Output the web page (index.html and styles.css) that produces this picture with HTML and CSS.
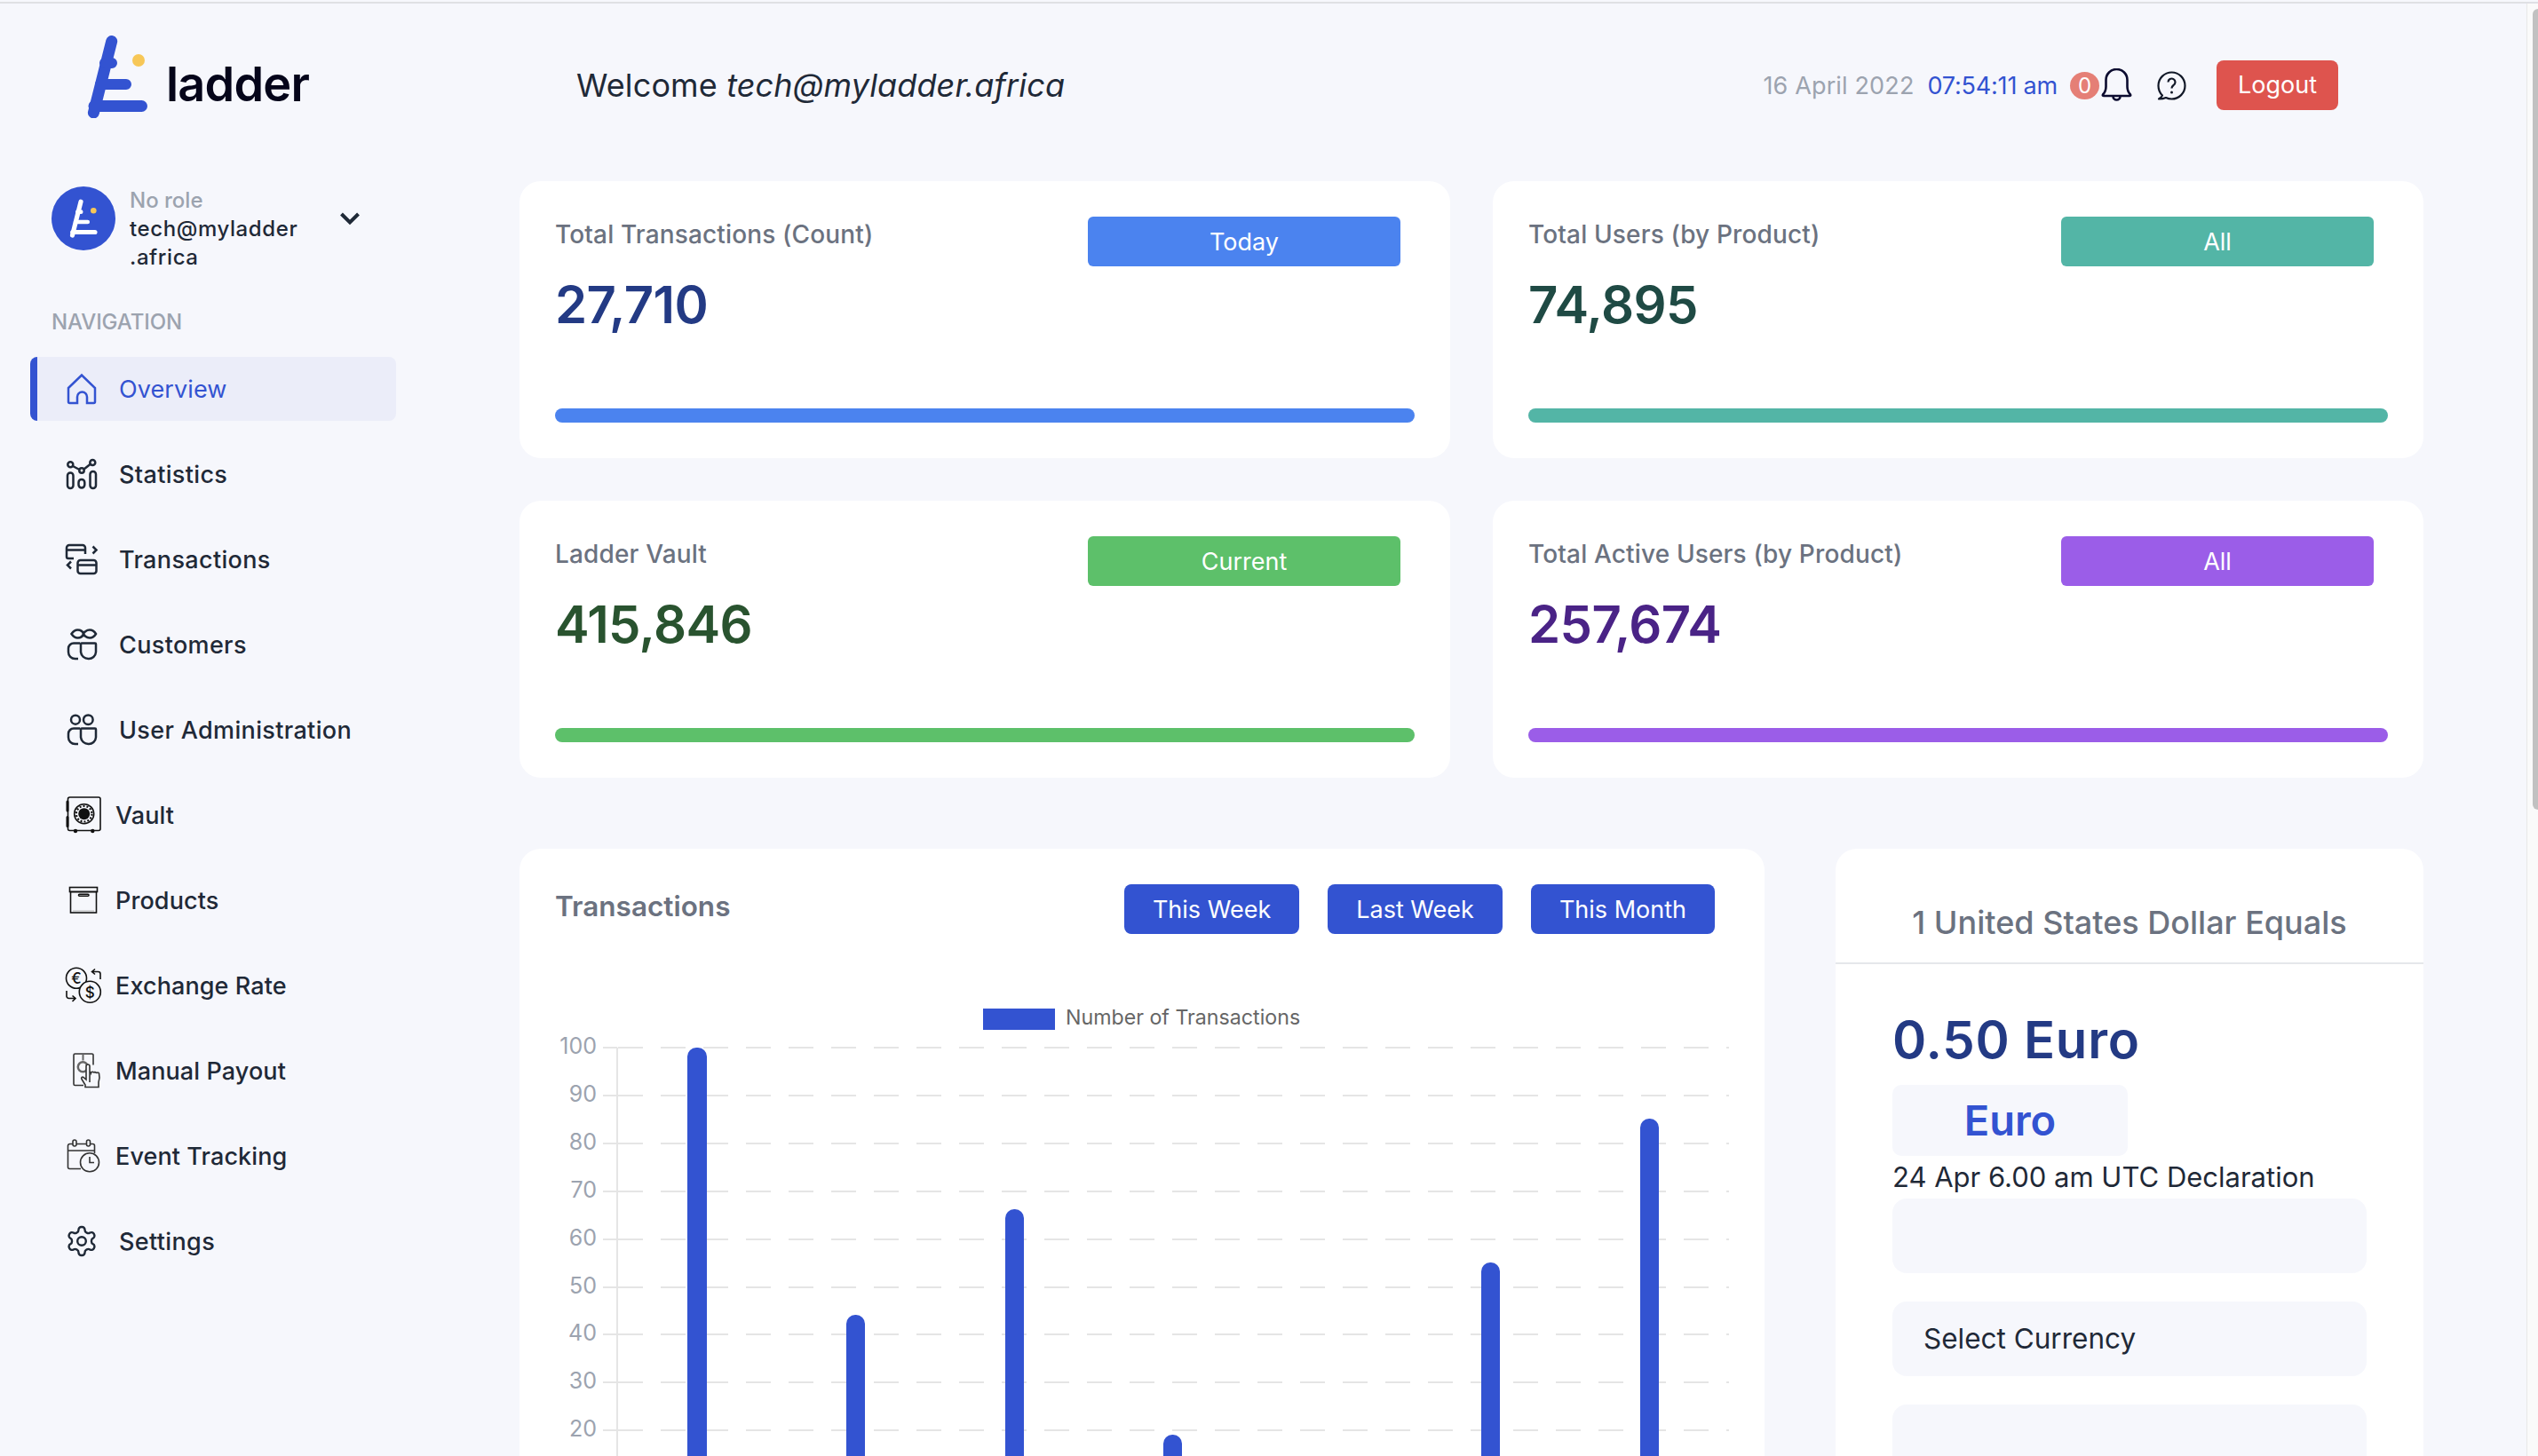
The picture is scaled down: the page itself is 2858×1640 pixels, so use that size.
FILE: index.html
```html
<!DOCTYPE html>
<html lang="en">
<head>
  <meta charset="UTF-8" />
  <title>Ladder Dashboard</title>
  <link rel="stylesheet" href="styles.css">
</head>
<body>
  <div class="topline"></div>
  <div class="page">

    <!-- sidebar -->
    <aside class="sidebar">
      <div class="logo">
        <svg class="logo-mark" viewBox="0 0 68 93">
          <g stroke="#3353d1" stroke-linecap="round" fill="none">
            <path stroke-width="13" d="M7.4 87 27.7 6.5"/>
            <path stroke-width="12" d="M20 31h8M15 55h29"/>
            <path stroke-width="13" d="M8 79.5h53.5"/>
          </g>
          <circle cx="58" cy="28" r="7" fill="#f7c757"/>
        </svg>
        <span class="logo-text">ladder</span>
      </div>

      <div class="profile">
        <div class="avatar">
          <svg viewBox="0 0 68 93" width="32" height="44">
            <g stroke="#fff" stroke-linecap="round" fill="none">
              <path stroke-width="11" d="M7.4 87 27.7 6.5"/>
              <path stroke-width="10" d="M20 31h8M15 55h29"/>
              <path stroke-width="11" d="M8 79.5h53.5"/>
            </g>
            <circle cx="58" cy="28" r="7" fill="#f7c757"/>
          </svg>
        </div>
        <div class="profile-text">
          <div class="role">No role</div>
          <div class="email">tech@myladder<br>.africa</div>
        </div>
        <svg class="chevron" viewBox="0 0 24 16" width="24" height="16">
          <path d="M2.5 3 12 12.5 21.5 3" fill="none" stroke="#1f2937" stroke-width="4"/>
        </svg>
      </div>

      <div class="nav-title">NAVIGATION</div>

      <nav class="nav">
        <a class="nav-item active" href="#">
          <svg class="ic" viewBox="0 0 40 40"><path d="M3 19 18 4.500 33 19v15.500a1.500 1.500 0 0 1-1.500 1.500H24V29a5 5 0 0 0-11 0v7H4.500A1.500 1.500 0 0 1 3 34.500z"/></svg>
          <span>Overview</span>
        </a>
        <a class="nav-item" href="#">
          <svg class="ic" viewBox="0 0 40 40">
            <circle cx="5.300" cy="9.300" r="3"/><circle cx="18" cy="16" r="2.700"/><circle cx="30.300" cy="7" r="3"/>
            <path d="M8 11l7.500 4M20.500 14.500 27.500 9"/>
            <rect x="2" y="18.500" width="6.500" height="17.500" rx="3.200"/>
            <rect x="14.500" y="26" width="6.800" height="9.500" rx="3.400"/>
            <rect x="27.500" y="17" width="6.500" height="19" rx="3.200"/>
          </svg>
          <span>Statistics</span>
        </a>
        <a class="nav-item" href="#">
          <svg class="ic" viewBox="0 0 40 40">
            <path d="M9 19H3a2 2 0 0 1-2-2V7a3 3 0 0 1 3-3h15a3 3 0 0 1 3 3v7M1.500 9.500h20"/>
            <rect x="13.500" y="21" width="21" height="15" rx="3"/>
            <path d="M13.500 26.500h21M30.500 5.500l4 4-4 4M6 22.500l-4 4 4 4"/>
          </svg>
          <span>Transactions</span>
        </a>
        <a class="nav-item" href="#">
          <svg class="ic" viewBox="0 0 40 40">
            <path d="M6.500 8c2-3 4-4.500 7-4.500 4 0 6 3 6.500 4.500.5-1.500 3-4.500 7-4.500 3 0 5.500 2 7 4.500-1.500 2.500-4 4.500-7 4.500-4 0-6.500-3-7-4.500C19.500 9.500 17.500 12.500 13.500 12.500c-3 0-5-1.500-7-4.500z"/>
            <path d="M16 18.500H9A6 6 0 0 0 3 24.500v4A7.500 7.500 0 0 0 10.500 36H14"/>
            <path d="M17 19.500a1 1 0 0 1 1-1h15a1 1 0 0 1 1 1v9A8 8 0 0 1 25.500 36 8.500 8.500 0 0 1 17 28.500z"/>
          </svg>
          <span>Customers</span>
        </a>
        <a class="nav-item" href="#">
          <svg class="ic" viewBox="0 0 40 40">
            <circle cx="11" cy="8.700" r="5"/><circle cx="25.300" cy="8.700" r="5.300"/>
            <path d="M16 18.500H9A6 6 0 0 0 3 24.500v4A7.500 7.500 0 0 0 10.500 36H14"/>
            <path d="M17 19.500a1 1 0 0 1 1-1h15a1 1 0 0 1 1 1v9A8 8 0 0 1 25.500 36 8.500 8.500 0 0 1 17 28.500z"/>
          </svg>
          <span>User Administration</span>
        </a>
        <a class="nav-item wide" href="#">
          <svg class="ic thin" viewBox="0 0 40 40">
            <rect x="2.500" y="0" width="36.500" height="37.500" rx="2"/>
            <path class="solid" d="M0.500 5a1.500 1.500 0 0 1 3 0v10a1.500 1.500 0 0 1-3 0zM0.500 22.500a1.500 1.500 0 0 1 3 0v10a1.500 1.500 0 0 1-3 0z"/>
            <circle cx="20.700" cy="18.700" r="11"/>
            <circle cx="20.700" cy="18.700" r="8.800" stroke-width="2.200" stroke-dasharray="2 2"/>
            <circle class="solid" cx="20.700" cy="18.700" r="6.500"/>
            <circle class="solid" cx="11" cy="38" r="2.200"/><circle class="solid" cx="30.300" cy="38" r="2.200"/>
          </svg>
          <span>Vault</span>
        </a>
        <a class="nav-item wide" href="#">
          <svg class="ic thin" viewBox="0 0 40 40">
            <rect x="4.500" y="5.500" width="31" height="5"/>
            <rect x="5.500" y="10.500" width="29" height="23.500"/>
            <rect x="14.500" y="13.300" width="11.500" height="2" rx="1"/>
            <path d="M8 32h24" stroke="#ccc"/>
          </svg>
          <span>Products</span>
        </a>
        <a class="nav-item wide" href="#">
          <svg class="ic thin" viewBox="0 0 40 40">
            <circle cx="12" cy="11.700" r="11.500"/>
            <circle class="page-fill" cx="27.300" cy="27.300" r="12"/>
            <text class="glyph" x="12" y="17.500" font-size="17">€</text>
            <text class="glyph" x="27.300" y="33.500" font-size="17">$</text>
            <path d="M39 13V7a2.500 2.500 0 0 0-2.500-2.500H29.500M33 1.500l-3.500 3 3.500 3M1 26v6a2.500 2.500 0 0 0 2.500 2.500h7M7.500 31.500l3.500 3-3.500 3.500"/>
          </svg>
          <span>Exchange Rate</span>
        </a>
        <a class="nav-item wide" href="#">
          <svg class="ic thin grey" viewBox="0 0 40 40">
            <path d="M20 36.500h-9.500a1.500 1.500 0 0 1-1.500-1.500V2.500A1.500 1.500 0 0 1 10.500 1h19A1.500 1.500 0 0 1 31 2.500v11"/>
            <circle cx="19.300" cy="15.700" r="5.500" stroke-width="2.500" stroke="#666"/>
            <path d="M19.500 1.500v7" stroke="#666" stroke-width="2"/>
            <path class="page-fill" d="M27 33V15a2 2 0 0 0-4 0v15l-3-2.500c-1.500-1-3 .5-2 2l4 6.500v2.500h15V33c1.500-4 1-8 .5-10-.5-1.500-2.500-1-3 0 0-1.500-2.500-2-3-.5 0-1.500-2.500-2-3 0-.3-1-1.500-1.500-1.500-.5z"/>
          </svg>
          <span>Manual Payout</span>
        </a>
        <a class="nav-item wide" href="#">
          <svg class="ic thin grey" viewBox="0 0 40 40">
            <path d="M17 34.500H4.500a2 2 0 0 1-2-2V8.500a2 2 0 0 1 2-2h26a2 2 0 0 1 2 2V17M2.500 14h30"/>
            <rect x="8" y="2" width="4" height="7" rx="2" class="page-fill"/>
            <rect x="23.500" y="2" width="4" height="7" rx="2" class="page-fill"/>
            <circle class="page-fill" cx="27" cy="27.300" r="10.500"/>
            <path d="M27 21v6.500h5"/>
          </svg>
          <span>Event Tracking</span>
        </a>
        <a class="nav-item" href="#">
          <svg class="ic" viewBox="0 0 40 40">
            <g transform="translate(-1.200 .8) scale(1.600)" stroke-width="1.500">
              <path d="M12.220 2h-.44a2 2 0 0 0-2 2v.18a2 2 0 0 1-1 1.730l-.43.25a2 2 0 0 1-2 0l-.15-.08a2 2 0 0 0-2.730.73l-.22.38a2 2 0 0 0 .73 2.730l.15.1a2 2 0 0 1 1 1.720v.51a2 2 0 0 1-1 1.740l-.15.09a2 2 0 0 0-.73 2.730l.22.38a2 2 0 0 0 2.730.73l.15-.08a2 2 0 0 1 2 0l.43.25a2 2 0 0 1 1 1.730V20a2 2 0 0 0 2 2h.44a2 2 0 0 0 2-2v-.18a2 2 0 0 1 1-1.730l.43-.25a2 2 0 0 1 2 0l.15.08a2 2 0 0 0 2.730-.73l.22-.39a2 2 0 0 0-.73-2.730l-.15-.08a2 2 0 0 1-1-1.740v-.5a2 2 0 0 1 1-1.740l.15-.09a2 2 0 0 0 .73-2.730l-.22-.38a2 2 0 0 0-2.730-.73l-.15.08a2 2 0 0 1-2 0l-.43-.25a2 2 0 0 1-1-1.730V4a2 2 0 0 0-2-2z"/>
              <circle cx="12" cy="12" r="3"/>
            </g>
          </svg>
          <span>Settings</span>
        </a>
      </nav>
    </aside>

    <!-- main content -->
    <main class="main">
      <header class="header">
        <div class="welcome">Welcome <em>tech@myladder.africa</em></div>
        <div class="header-right">
          <span class="date">16 April 2022</span>
          <span class="time">07:54:11 am</span>
          <span class="badge">0</span>
          <svg class="bell" viewBox="0 0 35 38" width="35" height="38">
            <path d="M2 29.500c2.500-2.500 3.500-4.500 3.500-9V13a12 12 0 0 1 24 0v7.500c0 4.500 1 6.500 3.500 9 .5 1-.2 1.500-1 1.500H3c-.8 0-1.500-.5-1-1.500z" fill="none" stroke="#0c0c30" stroke-width="2.600"/>
            <path d="M13.500 31.500a4 4 0 0 0 8 0" fill="none" stroke="#0c0c30" stroke-width="2.600"/>
          </svg>
          <svg class="help" viewBox="0 0 33 33" width="33" height="33">
            <path d="M6 27.500C3 24.500 1.500 21 1.500 16.500a15 15 0 1 1 15 15c-2.500 0-4.500-.5-6.500-1.500-2 1-5 1.500-8 1.500 1.500-1 3.500-2.500 4-4z" fill="none" stroke="#111827" stroke-width="2.200" stroke-linejoin="round"/>
            <path d="M12.500 12.500a4 4 0 1 1 6 3.500c-1.500 1-2 1.800-2 3.500" fill="none" stroke="#111827" stroke-width="2.200"/>
            <circle cx="16.500" cy="24" r="1.500" fill="#111827"/>
          </svg>
          <a class="logout" href="#">Logout</a>
        </div>
      </header>

      <section class="stats">
        <div class="stat-card blue">
          <div class="stat-head">
            <div class="stat-title">Total Transactions (Count)</div>
            <button class="stat-btn">Today</button>
          </div>
          <div class="stat-value">27,710</div>
          <div class="stat-bar"></div>
        </div>
        <div class="stat-card teal">
          <div class="stat-head">
            <div class="stat-title">Total Users (by Product)</div>
            <button class="stat-btn">All</button>
          </div>
          <div class="stat-value">74,895</div>
          <div class="stat-bar"></div>
        </div>
        <div class="stat-card green">
          <div class="stat-head">
            <div class="stat-title">Ladder Vault</div>
            <button class="stat-btn">Current</button>
          </div>
          <div class="stat-value">415,846</div>
          <div class="stat-bar"></div>
        </div>
        <div class="stat-card purple">
          <div class="stat-head">
            <div class="stat-title">Total Active Users (by Product)</div>
            <button class="stat-btn">All</button>
          </div>
          <div class="stat-value">257,674</div>
          <div class="stat-bar"></div>
        </div>
      </section>

      <section class="lower">
        <div class="chart-card">
          <div class="chart-head">
            <div class="chart-title">Transactions</div>
            <div class="chart-btns">
              <button class="chart-btn">This Week</button>
              <button class="chart-btn">Last Week</button>
              <button class="chart-btn">This Month</button>
            </div>
          </div>
          <svg class="chart" viewBox="625 1100 1325 600" width="1325" height="600">
            <rect class="bar" x="1107" y="1136" width="81" height="24"/>
            <text class="legend" x="1200" y="1154">Number of Transactions</text>

            <path class="grid" d="M696 1180H1947M696 1234H1947M696 1288H1947M696 1342H1947M696 1396H1947M696 1450H1947M696 1503H1947M696 1557H1947M696 1611H1947"/>
            <path class="axis" d="M695 1180V1700M679 1180H695M679 1234H695M679 1288H695M679 1342H695M679 1396H695M679 1450H695M679 1503H695M679 1557H695M679 1611H695"/>

            <text class="tick" x="672" y="1187">100</text>
            <text class="tick" x="672" y="1241">90</text>
            <text class="tick" x="672" y="1295">80</text>
            <text class="tick" x="672" y="1349">70</text>
            <text class="tick" x="672" y="1403">60</text>
            <text class="tick" x="672" y="1457">50</text>
            <text class="tick" x="672" y="1510">40</text>
            <text class="tick" x="672" y="1564">30</text>
            <text class="tick" x="672" y="1618">20</text>

            <rect class="bar" x="774" y="1180" width="22" height="520" rx="10"/>
            <rect class="bar" x="953" y="1481" width="21" height="220" rx="10"/>
            <rect class="bar" x="1132" y="1362" width="21" height="340" rx="10"/>
            <rect class="bar" x="1310" y="1616" width="21" height="90" rx="10"/>
            <rect class="bar" x="1668" y="1422" width="21" height="280" rx="10"/>
            <rect class="bar" x="1847" y="1260" width="21" height="440" rx="10"/>
          </svg>
        </div>

        <div class="rate-card">
          <div class="rate-head">1 United States Dollar Equals</div>
          <div class="rate-body">
            <div class="rate-value">0.50 Euro</div>
            <div class="rate-chip">Euro</div>
            <div class="rate-note">24 Apr 6.00 am UTC Declaration</div>
            <div class="rate-field"></div>
            <div class="rate-field">Select Currency</div>
            <div class="rate-field"></div>
          </div>
        </div>
      </section>
    </main>

    <!-- page scrollbar -->
    <div class="scrollbar"><div class="scroll-thumb"></div></div>
  </div>
</body>
</html>
```

FILE: styles.css
```css
* {
  box-sizing: border-box;
}

html, body {
  height: 1640px;
  overflow: hidden;
}

body {
  margin: 0;
  background: #f6f7fc;
  font-family: "Inter", "Noto Sans", sans-serif;
  color: #1f2937;
}

.topline {
  height: 4px;
  border-bottom: 2px solid #dfe0e4;
}

.page {
  display: flex;
  height: 1636px;
}

/* sidebar */
.sidebar {
  width: 585px;
  flex-shrink: 0;
}

.logo {
  display: flex;
  align-items: flex-start;
  padding: 36px 0 0 98px;
  height: 206px;
}

.logo-mark {
  width: 68px;
  height: 93px;
}

.logo-text {
  margin: 23px 0 0 21px;
  font-size: 54px;
  line-height: 64px;
  font-weight: 600;
  color: #05051a;
  letter-spacing: -0.8px;
}

.profile {
  display: flex;
  align-items: flex-start;
  padding-left: 58px;
  height: 96px;
}

.avatar {
  width: 72px;
  height: 72px;
  border-radius: 50%;
  background: #3353d1;
  display: flex;
  align-items: center;
  justify-content: center;
}

.profile-text {
  margin-left: 16px;
  width: 208px;
  font-size: 24px;
  line-height: 32px;
  font-weight: 500;
}

.role {
  color: #9ca3af;
}

.email {
  letter-spacing: 0.6px;
}

.chevron {
  margin: 28px 0 0 28px;
}

.nav-title {
  margin: 41px 0 0 58px;
  font-size: 24px;
  line-height: 32px;
  color: #9ca3af;
  font-weight: 500;
  letter-spacing: -0.1px;
}

.nav {
  display: flex;
  flex-direction: column;
  gap: 24px;
  width: 412px;
  margin: 23px 0 0 34px;
}

.nav-item {
  display: flex;
  align-items: center;
  gap: 20px;
  height: 72px;
  padding-left: 32px;
  border-left: 8px solid transparent;
  border-radius: 8px;
  font-size: 27px;
  font-weight: 500;
  letter-spacing: 0.35px;
  color: #1f2937;
  text-decoration: none;
}

.nav-item.wide {
  gap: 16px;
  letter-spacing: 0.1px;
}

.nav-item.active {
  background: #ebedf9;
  border-left-color: #3353d1;
  color: #3353d1;
  font-weight: 400;
  letter-spacing: 0.1px;
}

.ic {
  width: 40px;
  height: 40px;
  flex-shrink: 0;
  overflow: visible;
  fill: none;
  stroke: #1f2937;
  stroke-width: 2.5;
}

.active .ic {
  stroke: #3353d1;
}

.ic.thin {
  stroke: #111;
  stroke-width: 1.6;
}

.ic.grey {
  stroke: #333;
}

.ic .solid {
  fill: #111;
  stroke: none;
}

.ic .page-fill {
  fill: #f6f7fc;
}

.ic .glyph {
  fill: #111;
  stroke: none;
  text-anchor: middle;
  font-family: "Inter", sans-serif;
}

/* header */
.main {
  width: 2260px;
  padding-right: 116px;
  flex-shrink: 0;
}

.header {
  display: flex;
  align-items: center;
  justify-content: space-between;
  height: 184px;
  margin-bottom: 16px;
  padding: 0 96px 0 64px;
}

.welcome {
  font-size: 36px;
  letter-spacing: 0.12px;
  color: #1f2937;
}

.header-right {
  display: flex;
  align-items: center;
}

.date {
  font-size: 27px;
  letter-spacing: 0.15px;
  color: #9ca3af;
}

.time {
  margin-left: 15px;
  font-size: 27px;
  letter-spacing: -0.2px;
  color: #3353d1;
}

.badge {
  width: 33px;
  height: 31px;
  margin-left: 14px;
  border-radius: 50%;
  background: #e57f76;
  color: #fff;
  font-size: 24px;
  line-height: 31px;
  text-align: center;
}

.bell {
  margin-left: 2px;
}

.help {
  margin-left: 28px;
}

.logout {
  display: block;
  margin-left: 34px;
  width: 137px;
  height: 56px;
  border-radius: 8px;
  background: #de544e;
  color: #fff;
  font-size: 27px;
  line-height: 56px;
  text-align: center;
  text-decoration: none;
}

/* stat cards */
.stats {
  display: grid;
  grid-template-columns: 1048px 1048px;
  gap: 48px;
}

.stat-card {
  height: 312px;
  padding: 40px;
  background: #fff;
  border-radius: 24px;
}

.stat-head {
  display: flex;
  justify-content: space-between;
}

.stat-title {
  font-size: 28px;
  line-height: 40px;
  font-weight: 500;
  letter-spacing: 0.15px;
  color: #6b7280;
}

.stat-btn {
  width: 352px;
  height: 56px;
  margin-right: 16px;
  border: none;
  border-radius: 6px;
  color: #fff;
  font-family: inherit;
  font-size: 27px;
}

.stat-value {
  margin-top: 7px;
  font-size: 58px;
  line-height: 72px;
  font-weight: 600;
  letter-spacing: -0.6px;
}

.stat-bar {
  height: 16px;
  margin-top: 81px;
  border-radius: 8px;
}

.blue .stat-btn, .blue .stat-bar { background: #4b83ef; }
.blue .stat-value { color: #233a84; }
.teal .stat-btn, .teal .stat-bar { background: #53b5a6; }
.teal .stat-value { color: #1f4a44; }
.green .stat-btn, .green .stat-bar { background: #5dc06a; }
.green .stat-value { color: #29532f; }
.purple .stat-btn, .purple .stat-bar { background: #9b5de8; }
.purple .stat-value { color: #4a2386; }

/* chart */
.lower {
  display: flex;
  gap: 80px;
  margin-top: 80px;
}

.chart-card {
  width: 1402px;
  height: 684px;
  padding: 40px 40px 0;
  background: #fff;
  border-radius: 24px 24px 0 0;
  overflow: hidden;
}

.chart-head {
  display: flex;
  justify-content: space-between;
  padding-right: 16px;
}

.chart-title {
  font-size: 31.500px;
  line-height: 50px;
  font-weight: 600;
  color: #6b7280;
}

.chart-btns {
  display: flex;
  gap: 32px;
}

.chart-btn {
  height: 56px;
  padding: 0 32px;
  border: none;
  border-radius: 8px;
  background: #3353d1;
  color: #fff;
  font-family: inherit;
  font-size: 27px;
}

.chart {
  display: block;
  margin-top: 48px;
}

.grid {
  fill: none;
  stroke: #e5e5e5;
  stroke-width: 2;
  stroke-dasharray: 28 20;
}

.axis {
  fill: none;
  stroke: #e5e5e5;
  stroke-width: 2;
}

.tick {
  fill: #9ca3af;
  font-size: 25px;
  text-anchor: end;
}

.legend {
  fill: #666;
  font-size: 23.200px;
}

.bar {
  fill: #3353d1;
}

/* rate card */
.rate-card {
  width: 662px;
  height: 684px;
  background: #fff;
  border-radius: 24px 24px 0 0;
  overflow: hidden;
}

.rate-head {
  height: 130px;
  padding-top: 53px;
  border-bottom: 2px solid #e5e7eb;
  font-size: 36px;
  line-height: 60px;
  font-weight: 500;
  color: #6b7280;
  text-align: center;
}

.rate-body {
  padding: 0 64px;
}

.rate-value {
  margin-top: 45px;
  font-size: 58px;
  line-height: 80px;
  font-weight: 600;
  letter-spacing: 0.8px;
  color: #233a84;
}

.rate-chip {
  width: 265px;
  height: 80px;
  margin-top: 11px;
  border-radius: 10px;
  background: #f6f7fc;
  color: #3353d1;
  font-size: 47px;
  line-height: 80px;
  font-weight: 600;
  text-align: center;
}

.rate-note {
  font-size: 31px;
  line-height: 48px;
}

.rate-field {
  height: 84px;
  margin-bottom: 32px;
  padding-left: 35px;
  border-radius: 16px;
  background: #f6f7fc;
  font-size: 31.500px;
  line-height: 84px;
}

/* fake page scrollbar */
.scrollbar {
  flex: 1;
  border-left: 1px solid #e8e8e8;
  background: #fafafa;
  padding: 6px 0 0 6px;
}

.scroll-thumb {
  height: 902px;
  border-radius: 6px 0 0 6px;
  background: #c1c1c1;
}
```
